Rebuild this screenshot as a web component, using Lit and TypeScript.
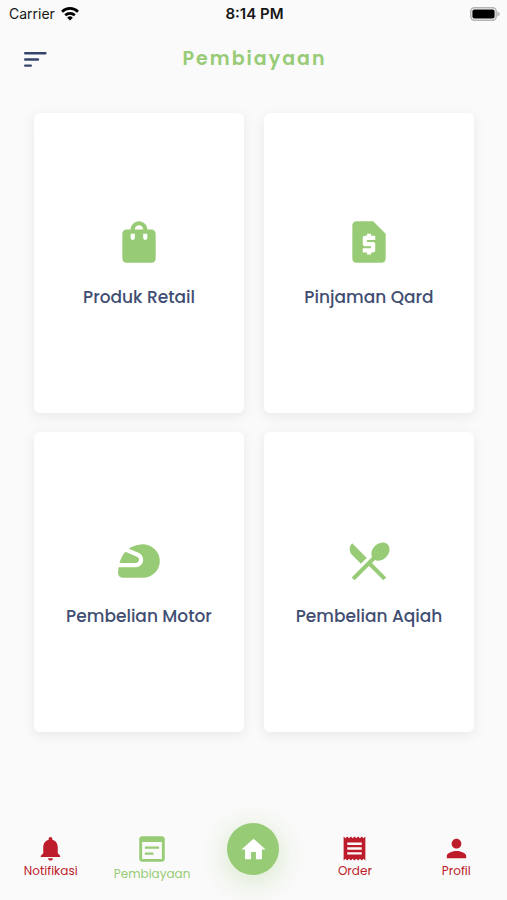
import { LitElement, html, css, svg } from "lit";
import { customElement, property } from "lit/decorators.js";

const icons: Record<string, string> = {
  bag: "M18,6h-2c0-2.21-1.79-4-4-4S8,3.79,8,6H6C4.9,6,4,6.9,4,8v12c0,1.1,0.9,2,2,2h12c1.1,0,2-0.9,2-2V8C20,6.9,19.1,6,18,6z M10,10c0,0.55-0.45,1-1,1s-1-0.45-1-1V8h2V10z M12,4c1.1,0,2,0.9,2,2h-4C10,4.9,10.9,4,12,4z M16,10c0,0.55-0.45,1-1,1s-1-0.45-1-1V8h2V10z",
  loan: "M14 2H6c-1.1 0-1.99.9-1.99 2L4 20c0 1.1.89 2 1.99 2H18c1.1 0 2-.9 2-2V8l-6-6zm1 9h-4v1h3c.55 0 1 .45 1 1v3c0 .55-.45 1-1 1h-1v1h-2v-1H9v-2h4v-1h-3c-.55 0-1-.45-1-1v-3c0-.55.45-1 1-1h1V8h2v1h2v2z",
  helmet: "M12 11.39c0-.65-.39-1.23-.98-1.48L5.44 7.55c-1.48 1.68-2.32 3.7-2.8 5.45h7.75c.89 0 1.61-.72 1.61-1.61zM21.96 11.22c-.41-4.41-4.56-7.49-8.98-7.2-2.51.16-4.44.94-5.93 2.04l4.74 2.01c1.33.57 2.2 1.87 2.2 3.32 0 1.99-1.62 3.61-3.61 3.61H2.21C2 16.31 2 17.2 2 17.2v.8c0 1.1.9 2 2 2h10c4.67 0 8.41-4.01 7.96-8.78z",
  cutlery: "M8.1 13.34l2.83-2.83L3.91 3.5c-1.56 1.56-1.56 4.09 0 5.66l4.19 4.18zm6.78-1.81c1.53.71 3.68.21 5.27-1.38 1.91-1.91 2.28-4.65.81-6.12-1.46-1.46-4.2-1.1-6.12.81-1.59 1.59-2.09 3.74-1.38 5.27L3.7 19.87l1.41 1.41L12 14.41l6.88 6.88 1.41-1.41L13.41 13l1.47-1.47z",
  bell: "M12 22c1.1 0 2-.9 2-2h-4c0 1.1.89 2 2 2zm6-6v-5c0-3.07-1.64-5.64-4.5-6.32V4c0-.83-.67-1.5-1.5-1.5s-1.5.67-1.5 1.5v.68C7.63 5.36 6 7.92 6 11v5l-2 2v1h16v-1l-2-2z",
  form: "M19 3H5c-1.11 0-2 .9-2 2v14c0 1.1.89 2 2 2h14c1.1 0 2-.9 2-2V5c0-1.1-.89-2-2-2zm0 16H5V7h14v12zm-2-7.2H7v-1.6h10v1.6zm-4 4.2H7v-1.6h6v1.6z",
  home: "M10 20v-6h4v6h5v-8h3L12 3 2 12h3v8z",
  receipt: "M18 17H6v-2h12v2zm0-4H6v-2h12v2zm0-4H6V7h12v2zM3 22l1.5-1.5L6 22l1.5-1.5L9 22l1.5-1.5L12 22l1.5-1.5L15 22l1.5-1.5L18 22l1.5-1.5L21 22V2l-1.5 1.5L18 2l-1.5 1.5L15 2l-1.5 1.5L12 2l-1.5 1.5L9 2 7.5 3.5 6 2 4.5 3.5 3 2v20z",
  person: "M12 12c2.21 0 4-1.79 4-4s-1.79-4-4-4-4 1.79-4 4 1.79 4 4 4zm0 2c-2.67 0-8 1.34-8 4v2h16v-2c0-2.66-5.33-4-8-4z",
};

const glyph = (name: string) =>
  html`<svg class="glyph" viewBox="0 0 24 24" aria-hidden="true">${svg`<path fill="currentColor" d=${icons[name]}></path>`}</svg>`;

@customElement("status-bar")
export class StatusBar extends LitElement {
  static styles = css`
    :host {
      display: grid;
      grid-template-columns: 1fr auto 1fr;
      align-items: center;
      height: 27px;
      padding: 0 7px 0 9px;
      color: #161616;
      font: 400 14px/20px Inter, "Liberation Sans", sans-serif;
    }
    .carrier { display: flex; align-items: center; gap: 6px; }
    .time { font-weight: 600; font-size: 15px; }
    .battery { justify-self: end; display: block; }
  `;
  render() {
    return html`
      <span class="carrier">Carrier
        <svg width="18" height="14" viewBox="0 0 18 14" aria-hidden="true">
          <g fill="none" stroke="#000" stroke-width="2.6">
            <path d="M1 4.7a11.4 11.4 0 0 1 16 0"></path>
            <path d="M4.2 8.3a6.9 6.9 0 0 1 9.6 0"></path>
          </g>
          <path d="M9 13.6 6.2 10.7a4 4 0 0 1 5.6 0z"></path>
        </svg>
      </span>
      <span class="time">8:14 PM</span>
      <svg class="battery" width="30" height="14" viewBox="0 0 30 14" aria-hidden="true">
        <rect x="0.8" y="0.8" width="25.4" height="12.4" rx="3.6" fill="#fafafa" stroke="#b4b4b4" stroke-width="1.5"></rect>
        <rect x="2.4" y="2.4" width="22.2" height="9.2" rx="2" fill="#000"></rect>
        <path d="M27.4 4.6q2.4.8 2.4 2.4t-2.4 2.4z" fill="#b4b4b4"></path>
      </svg>
    `;
  }
}

@customElement("menu-card")
export class MenuCard extends LitElement {
  @property() icon = "";
  @property() label = "";
  static styles = css`
    :host { display: block; }
    .card {
      display: flex;
      flex-direction: column;
      align-items: center;
      justify-content: center;
      gap: 17px;
      box-sizing: border-box;
      width: 100%;
      aspect-ratio: 7 / 10;
      padding: 1px 8px 0;
      border: 0;
      border-radius: 6px;
      background: #fff;
      box-shadow: 0 3px 12px rgba(60, 75, 100, 0.1);
      color: #3f4e72;
      font: 500 17px/26px Poppins, Inter, "Liberation Sans", sans-serif;
      cursor: pointer;
    }
    .glyph { width: 50px; height: 50px; color: #98cb76; }
  `;
  render() {
    return html`<button class="card" type="button">${glyph(this.icon)}<span>${this.label}</span></button>`;
  }
}

@customElement("tab-bar")
export class TabBar extends LitElement {
  static styles = css`
    :host { display: block; }
    .tabs { display: grid; grid-template-columns: repeat(5, 1fr); align-items: center; height: 102px; }
    .tab {
      display: flex;
      flex-direction: column;
      align-items: center;
      padding-top: 15px;
      color: #bd1c2b;
      text-decoration: none;
      font: 400 12px/16px Poppins, Inter, "Liberation Sans", sans-serif;
    }
    .tab .glyph { width: 29px; height: 29px; }
    .tab.active { color: #98cb76; }
    .tab.active .glyph { width: 34px; height: 34px; }
    .home {
      display: grid;
      place-items: center;
      justify-self: center;
      width: 52px;
      height: 52px;
      border-radius: 50%;
      background: #98cb76;
      color: #fff;
      box-shadow: 0 6px 30px rgba(152, 203, 118, 0.4);
    }
    .home .glyph { width: 29px; height: 29px; }
  `;
  render() {
    return html`
      <nav class="tabs">
        <a class="tab" href="#notifikasi">${glyph("bell")}<span>Notifikasi</span></a>
        <a class="tab active" href="#pembiayaan" aria-current="page">${glyph("form")}<span>Pembiayaan</span></a>
        <a class="home" href="#home" aria-label="Home">${glyph("home")}</a>
        <a class="tab" href="#order">${glyph("receipt")}<span>Order</span></a>
        <a class="tab" href="#profil">${glyph("person")}<span>Profil</span></a>
      </nav>
    `;
  }
}

@customElement("app-root")
export class AppRoot extends LitElement {
  static styles = css`
    :host {
      display: flex;
      flex-direction: column;
      min-height: 100vh;
      background: #fafafa;
    }
    .header {
      display: grid;
      grid-template-columns: 1fr auto 1fr;
      align-items: center;
      height: 64px;
      padding: 0 22px 0 24px;
    }
    .menu { display: block; width: 23px; height: 16px; padding: 0; border: 0; background: none; cursor: pointer; }
    .menu svg { display: block; }
    .title {
      margin: 0;
      color: #98cb76;
      font: 600 19px/30px Poppins, Inter, "Liberation Sans", sans-serif;
      letter-spacing: 2px;
    }
    .cards {
      display: grid;
      grid-template-columns: 1fr 1fr;
      gap: 19px 20px;
      padding: 22px 33px 24px 34px;
    }
    .tabbar { margin-top: auto; }
  `;
  render() {
    return html`
      <status-bar></status-bar>
      <header class="header">
        <button class="menu" type="button" aria-label="Menu">
          <svg width="23" height="16" viewBox="0 0 23 16" aria-hidden="true">
            <g stroke="#34446b" stroke-width="2.4" stroke-linecap="round">
              <path d="M1.2 2.3h20.2M1.2 8.5h12.8M1.2 14.6h5.6"></path>
            </g>
          </svg>
        </button>
        <h1 class="title">Pembiayaan</h1>
      </header>
      <main class="cards">
        <menu-card icon="bag" label="Produk Retail"></menu-card>
        <menu-card icon="loan" label="Pinjaman Qard"></menu-card>
        <menu-card icon="helmet" label="Pembelian Motor"></menu-card>
        <menu-card icon="cutlery" label="Pembelian Aqiah"></menu-card>
      </main>
      <tab-bar class="tabbar"></tab-bar>
    `;
  }
}
